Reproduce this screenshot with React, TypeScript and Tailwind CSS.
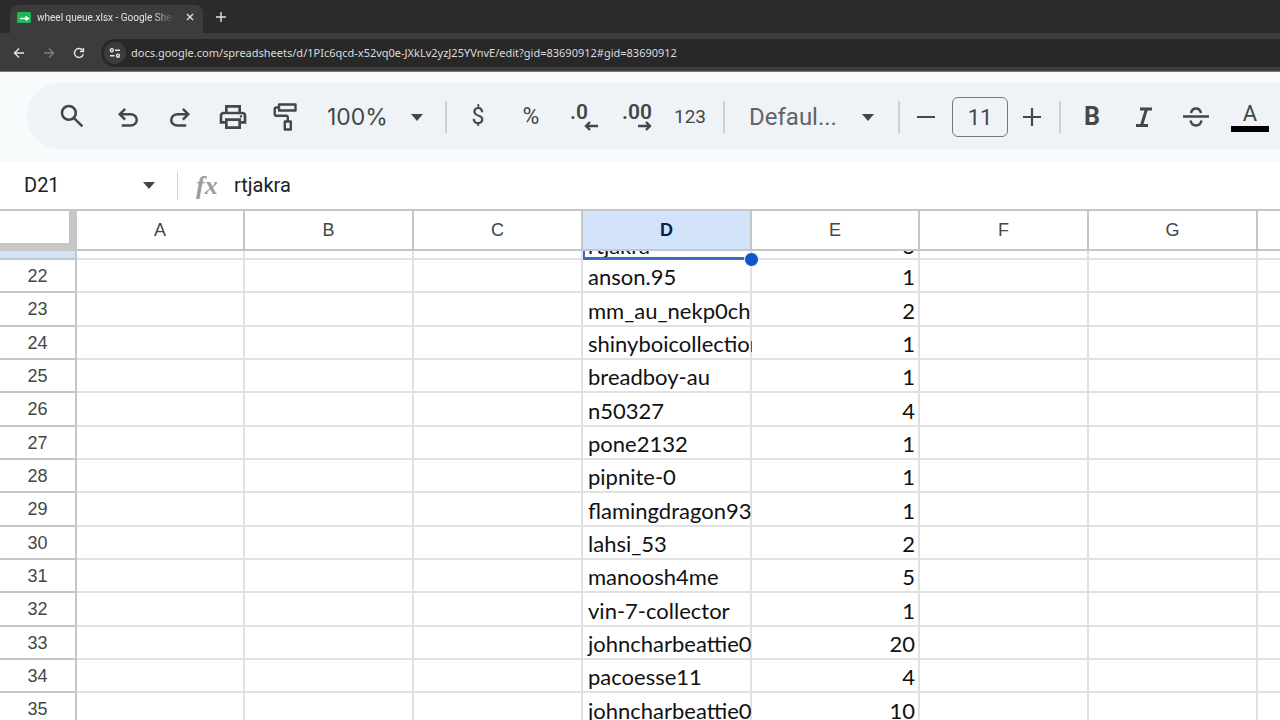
import type { ReactNode } from "react";

type Row = { n: number; name: string; count: number };

const COLUMNS = ["A", "B", "C", "D", "E", "F", "G"];

const ROWS: Row[] = [
    { n: 22, name: "anson.95", count: 1 },
    { n: 23, name: "mm_au_nekp0ch", count: 2 },
    { n: 24, name: "shinyboicollection", count: 1 },
    { n: 25, name: "breadboy-au", count: 1 },
    { n: 26, name: "n50327", count: 4 },
    { n: 27, name: "pone2132", count: 1 },
    { n: 28, name: "pipnite-0", count: 1 },
    { n: 29, name: "flamingdragon93", count: 1 },
    { n: 30, name: "lahsi_53", count: 2 },
    { n: 31, name: "manoosh4me", count: 5 },
    { n: 32, name: "vin-7-collector", count: 1 },
    { n: 33, name: "johncharbeattie0", count: 20 },
    { n: 34, name: "pacoesse11", count: 4 },
    { n: 35, name: "johncharbeattie0", count: 10 },
];

function Symbol({ d, className }: { d: string; className: string }) {
    return (
        <svg viewBox="0 -960 960 960" fill="currentColor" className={className} aria-hidden="true">
            <path d={d} />
        </svg>
    );
}

function ToolButton({ label, children }: { label: string; children: ReactNode }) {
    return (
        <button type="button" aria-label={label} className="flex h-12 w-[52px] shrink-0 items-center justify-center">
            {children}
        </button>
    );
}

function Divider() {
    return <div className="h-8 w-0.5 shrink-0 bg-[#cdd0d4]" />;
}

function Caret() {
    return (
        <svg viewBox="0 0 12 7" className="h-[7px] w-3" fill="currentColor" aria-hidden="true">
            <path d="M0 0h12L6 7z" />
        </svg>
    );
}

function BrowserBar() {
    return (
        <div className="shrink-0 border-b border-[#777] bg-[#3c3c3c] font-['Noto_Sans',sans-serif] text-[#e3e3e3]">
            {/* Tab strip */}
            <div className="flex h-[33px] items-end bg-[#2b2b2b] pl-[10px]">
                <div className="flex h-7 w-[193px] items-center rounded-t-lg bg-[#3c3c3c] pr-[5px] pb-1 pl-[7px]">
                    <svg viewBox="0 0 14 11" className="mr-[6px] h-[11px] w-[14px] shrink-0" aria-hidden="true">
                        <rect width="14" height="11" rx="1.5" fill="#1db954" />
                        <path d="M3 6.5h8M9 4v4M9 4.5l2.5 2L9 8.5" stroke="#fff" strokeWidth="1.4" fill="none" />
                    </svg>
                    <span className="flex-1 overflow-hidden font-[Roboto,sans-serif] text-[10px] whitespace-nowrap [mask-image:linear-gradient(to_right,black_85%,transparent)]">
                        wheel queue.xlsx - Google Sheets
                    </span>
                    <button type="button" aria-label="Close tab" className="ml-2 flex h-4 w-4 items-center justify-center">
                        <svg viewBox="0 0 8 8" className="h-2 w-2" stroke="currentColor" strokeWidth="1.4" aria-hidden="true">
                            <path d="M1 1l6 6M7 1L1 7" />
                        </svg>
                    </button>
                </div>
                <button type="button" aria-label="New tab" className="ml-2 flex h-8 w-5 items-center justify-center">
                    <svg viewBox="0 0 10 10" className="h-[10px] w-[10px]" stroke="currentColor" strokeWidth="1.4" aria-hidden="true">
                        <path d="M5 0v10M0 5h10" />
                    </svg>
                </button>
            </div>
            {/* Navigation and address */}
            <div className="flex h-[38px] items-center pt-0.5 pl-1">
                <button type="button" aria-label="Back" className="flex w-[30px] justify-center">
                    <svg viewBox="0 0 12 12" className="h-3 w-3" fill="none" stroke="currentColor" strokeWidth="1.4" aria-hidden="true">
                        <path d="M11 6H2M6 1.5L1.5 6 6 10.5" />
                    </svg>
                </button>
                <button type="button" aria-label="Forward" className="flex w-[30px] justify-center text-[#7c7c7c]">
                    <svg viewBox="0 0 12 12" className="h-3 w-3" fill="none" stroke="currentColor" strokeWidth="1.4" aria-hidden="true">
                        <path d="M1 6h9M6 1.5L10.5 6 6 10.5" />
                    </svg>
                </button>
                <button type="button" aria-label="Reload" className="flex w-[30px] justify-center">
                    <svg viewBox="0 0 12 12" className="h-3 w-3" fill="none" stroke="currentColor" strokeWidth="1.4" aria-hidden="true">
                        <path d="M10.3 7.3A4.5 4.5 0 1 1 9.6 3.3M10.5 1v3.5H7" />
                    </svg>
                </button>
                <div className="ml-[7px] flex h-7 flex-1 items-center rounded-l-full bg-[#282828] pl-[3px]">
                    <button type="button" aria-label="Site information" className="flex h-[22px] w-[22px] shrink-0 items-center justify-center rounded-full bg-[#3c3c3c]">
                        <svg viewBox="0 0 12 12" className="h-3 w-3" fill="none" stroke="currentColor" strokeWidth="1.4" aria-hidden="true">
                            <circle cx="2.8" cy="3.2" r="1.5" />
                            <path d="M6 3.2h5M1 8.8h4.5" />
                            <circle cx="9" cy="8.8" r="1.5" />
                        </svg>
                    </button>
                    <input
                        aria-label="Address"
                        className="ml-[5px] min-w-0 flex-1 bg-transparent text-[11px] text-[#dcdcdc] outline-none"
                        defaultValue="docs.google.com/spreadsheets/d/1PIc6qcd-x52vq0e-JXkLv2yzJ25YVnvE/edit?gid=83690912#gid=83690912"
                    />
                </div>
            </div>
        </div>
    );
}

function Toolbar() {
    return (
        <div className="flex h-[90px] shrink-0 items-start bg-[#f8fbfc] pt-[11px] pl-[27px]">
            <div className="flex h-[66px] flex-1 items-center overflow-hidden rounded-l-full bg-[#eff3f8] pt-0.5 pl-[19px] font-[Roboto,sans-serif] text-[#444746]">
                <ToolButton label="Search the menus">
                    <Symbol
                        className="mb-0.5 h-[30px] w-[30px]"
                        d="M784-120 532-372q-30 24-69 38t-83 14q-109 0-184.5-75.5T120-580q0-109 75.5-184.5T380-840q109 0 184.5 75.5T640-580q0 44-14 83t-38 69l252 252-56 56ZM380-400q75 0 127.5-52.5T560-580q0-75-52.5-127.5T380-760q-75 0-127.5 52.5T200-580q0 75 52.5 127.5T380-400Z"
                    />
                </ToolButton>
                <div className="ml-1 flex">
                    <ToolButton label="Undo">
                        <Symbol
                            className="mt-0.5 h-[30px] w-[30px]"
                            d="M280-200v-80h284q63 0 109.5-40T720-420q0-60-46.5-100T564-560H312l104 104-56 56-200-200 200-200 56 56-104 104h252q97 0 169.5 63T800-420q0 94-72.5 157T564-200H280Z"
                        />
                    </ToolButton>
                    <ToolButton label="Redo">
                        <Symbol
                            className="mt-0.5 h-[30px] w-[30px]"
                            d="M396-200q-97 0-169.5-63T160-420q0-94 72.5-157T396-640h252L544-744l56-56 200 200-200 200-56-56 104-104H396q-63 0-109.5 40T240-420q0 60 46.5 100T396-280h284v80H396Z"
                        />
                    </ToolButton>
                </div>
                <div className="ml-px flex">
                    <ToolButton label="Print">
                        <Symbol
                            className="h-8 w-8"
                            d="M640-640v-120H320v120h-80v-200h480v200h-80Zm80 180q17 0 28.5-11.5T760-500q0-17-11.5-28.5T720-540q-17 0-28.5 11.5T680-500q0 17 11.5 28.5T720-460Zm-80 260v-160H320v160h320Zm80 80H240v-160H80v-240q0-51 35-85.5t85-34.5h560q51 0 85.5 34.5T880-520v240H720v160Zm80-240v-160q0-17-11.5-28.5T760-560H200q-17 0-28.5 11.5T160-520v160h80v-80h480v80h80Z"
                        />
                    </ToolButton>
                    <ToolButton label="Paint format">
                        <svg viewBox="0 0 24 28" className="h-7 w-6" fill="none" stroke="currentColor" strokeWidth="2.4" strokeLinejoin="round" aria-hidden="true">
                            <rect x="6" y="1.5" width="16.5" height="6" />
                            <path d="M6 4.5H3.5Q1.7 4.5 1.7 6.3V11Q1.7 12.8 3.5 12.8H13Q14.8 12.8 14.8 14.6V18.5" />
                            <rect x="11.8" y="18.5" width="6" height="8" />
                        </svg>
                    </ToolButton>
                </div>
                <div className="relative ml-4 flex w-[118px] shrink-0 items-center">
                    <select aria-label="Zoom" className="w-full appearance-none bg-transparent font-[Inter,sans-serif] text-[23px] outline-none">
                        <option>100%</option>
                    </select>
                    <span className="pointer-events-none absolute right-[22px]">
                        <Caret />
                    </span>
                </div>
                <Divider />
                <div className="mr-[7px] ml-[5px] flex gap-px">
                    <ToolButton label="Format as currency">
                        <span className="text-[23px]">$</span>
                    </ToolButton>
                    <ToolButton label="Format as percent">
                        <span className="text-[23px]">%</span>
                    </ToolButton>
                    <ToolButton label="Decrease decimal places">
                        <span className="flex flex-col items-end text-[21px] leading-[18px] font-semibold">
                            <span className="pr-[10px]">.0</span>
                            <svg viewBox="0 0 14 10" className="h-[10px] w-[14px]" fill="none" stroke="currentColor" strokeWidth="2.4" aria-hidden="true">
                                <path d="M14 5H2M6 1L2 5l4 4" />
                            </svg>
                        </span>
                    </ToolButton>
                    <ToolButton label="Increase decimal places">
                        <span className="flex flex-col items-end text-[21px] leading-[18px] font-semibold">
                            <span>.00</span>
                            <svg viewBox="0 0 14 10" className="h-[10px] w-[14px]" fill="none" stroke="currentColor" strokeWidth="2.4" aria-hidden="true">
                                <path d="M0 5h12M8 1l4 4-4 4" />
                            </svg>
                        </span>
                    </ToolButton>
                    <ToolButton label="More formats">
                        <span className="text-[19px]">123</span>
                    </ToolButton>
                </div>
                <Divider />
                <div className="relative ml-6 flex w-[149px] shrink-0 items-center">
                    <select aria-label="Font" className="w-full appearance-none bg-transparent text-2xl text-[#5f6368] outline-none">
                        <option>Defaul...</option>
                    </select>
                    <span className="pointer-events-none absolute right-6">
                        <Caret />
                    </span>
                </div>
                <Divider />
                <button type="button" aria-label="Decrease font size" className="flex h-12 w-[52px] shrink-0 items-center justify-center">
                    <svg viewBox="0 0 18 18" className="h-[18px] w-[18px]" stroke="currentColor" strokeWidth="2.2" aria-hidden="true">
                        <path d="M0 9h18" />
                    </svg>
                </button>
                <input
                    aria-label="Font size"
                    defaultValue="11"
                    className="h-10 w-14 shrink-0 rounded-md border border-[#747775] bg-transparent text-center text-[22px] outline-none"
                />
                <button type="button" aria-label="Increase font size" className="mr-[3px] flex h-12 w-12 shrink-0 items-center justify-center">
                    <svg viewBox="0 0 18 18" className="h-[18px] w-[18px]" stroke="currentColor" strokeWidth="2.2" aria-hidden="true">
                        <path d="M0 9h18M9 0v18" />
                    </svg>
                </button>
                <Divider />
                <div className="ml-[5px] flex">
                    <ToolButton label="Bold">
                        <span className="text-[25px] font-bold">B</span>
                    </ToolButton>
                    <ToolButton label="Italic">
                        <svg viewBox="0 0 18 20" className="h-5 w-[18px]" fill="none" stroke="currentColor" strokeWidth="3" aria-hidden="true">
                            <path d="M5 2h12M1 18.5h12M11.5 2L6.5 18.5" />
                        </svg>
                    </ToolButton>
                    <ToolButton label="Strikethrough">
                        <svg viewBox="0 0 26 20" className="h-5 w-[26px]" fill="none" stroke="currentColor" strokeWidth="2.4" aria-hidden="true">
                            <path d="M0 9.5h26M18 6Q17 1.5 13 1.5T8 6M7.5 13.5Q8.500 18.5 13 18.5T18.5 13.5" />
                        </svg>
                    </ToolButton>
                    <button type="button" aria-label="Text color" className="flex h-12 w-14 shrink-0 flex-col items-center justify-center">
                        <span className="text-[22px] leading-6">A</span>
                        <span className="h-1.5 w-[38px] bg-black" />
                    </button>
                </div>
            </div>
        </div>
    );
}

function FormulaBar() {
    return (
        <div className="flex h-[47px] shrink-0 items-center bg-white font-[Roboto,sans-serif] text-xl text-[#202124]">
            <input aria-label="Name box" defaultValue="D21" className="w-[120px] bg-transparent pb-0.5 pl-6 outline-none" />
            <button type="button" aria-label="Open name list" className="flex w-[57px] justify-center pl-px text-[#444746]">
                <Caret />
            </button>
            <div className="h-7 w-px bg-[#d0d3d6]" />
            <span className="w-14 pl-[18px] font-['Liberation_Serif',serif] text-[26px] leading-7 font-bold text-[#9a9c9e] italic">
                fx
            </span>
            <input aria-label="Formula" defaultValue="rtjakra" className="min-w-0 flex-1 bg-transparent pb-0.5 outline-none" />
        </div>
    );
}

function Sheet() {
    return (
        <div className="min-h-0 flex-1 overflow-hidden bg-white">
            <table className="w-full table-fixed border-separate border-spacing-0 font-['Liberation_Sans',sans-serif] text-lg">
                <colgroup>
                    <col className="w-[77px]" />
                    <col className="w-[168px]" />
                    <col className="w-[169px]" />
                    <col className="w-[169px]" />
                    <col className="w-[169px]" />
                    <col className="w-[168px]" />
                    <col className="w-[169px]" />
                    <col className="w-[169px]" />
                    <col />
                </colgroup>
                <thead>
                    <tr className="h-[42px] text-[#444746]">
                        <td className="border-t-2 border-r-[8px] border-b-[8px] border-[#c6c7c8] p-0" />
                        {COLUMNS.map((c) => (
                            <th
                                key={c}
                                scope="col"
                                className={
                                    c === "D"
                                        ? "border-t-2 border-r-2 border-b-2 border-[#c4c7c9] bg-[#d3e3fa] p-0 font-bold text-[#0b1f4b]"
                                        : "border-t-2 border-r-2 border-b-2 border-[#c4c7c9] p-0 font-normal"
                                }
                            >
                                {c}
                            </th>
                        ))}
                        <td className="border-t-2 border-b-2 border-[#c4c7c9] p-0" />
                    </tr>
                </thead>
                <tbody className="font-[Lato,sans-serif] text-[22px] leading-[28px] text-[#111]">
                    {/* Row 21 is scrolled mostly under the column headings */}
                    <tr>
                        <th scope="row" aria-label="21" className="h-[9px] border-r-2 border-b-2 border-[#c4c7c9] bg-[#d2e3f6] p-0" />
                        {COLUMNS.map((c) => {
                            if (c === "D") {
                                return (
                                    <td key={c} className="relative h-[9px] border-r-2 border-b-[3px] border-r-[#e1e1e1] border-b-[#3b6cc9] p-0">
                                        <div className="flex h-[6px] items-end overflow-hidden border-l-2 border-[#3b6cc9] pl-[3px] leading-[22px]">rtjakra</div>
                                        <span className="absolute -right-[9px] -bottom-[10px] z-10 h-[15px] w-[15px] rounded-full border border-white bg-[#1155cc]" />
                                    </td>
                                );
                            }
                            return (
                                <td key={c} className="h-[9px] border-r-2 border-b-2 border-[#e1e1e1] p-0">
                                    {c === "E" && <div className="flex h-[7px] items-end justify-end overflow-hidden pr-[3px] leading-6">3</div>}
                                </td>
                            );
                        })}
                        <td className="h-[9px] border-b-2 border-[#e1e1e1] p-0" />
                    </tr>
                    {ROWS.map((row) => (
                        <tr key={row.n} className="h-[33px] nth-[3n]:h-[34px]">
                            <th
                                scope="row"
                                className="border-r-2 border-b-2 border-[#c4c7c9] p-0 font-['Liberation_Sans',sans-serif] text-lg font-normal text-[#444746]"
                            >
                                {row.n}
                            </th>
                            {COLUMNS.map((c) => (
                                <td key={c} className="border-r-2 border-b-2 border-[#e1e1e1] p-0 align-bottom">
                                    {c === "D" && <div className="-mr-0.5 overflow-hidden pl-[5px] whitespace-nowrap">{row.name}</div>}
                                    {c === "E" && <div className="pr-[3px] text-right">{row.count}</div>}
                                </td>
                            ))}
                            <td className="border-b-2 border-[#e1e1e1] p-0" />
                        </tr>
                    ))}
                </tbody>
            </table>
        </div>
    );
}

export default function App() {
    return (
        <div className="flex h-screen flex-col overflow-hidden bg-white">
            <BrowserBar />
            <Toolbar />
            <FormulaBar />
            <Sheet />
        </div>
    );
}
